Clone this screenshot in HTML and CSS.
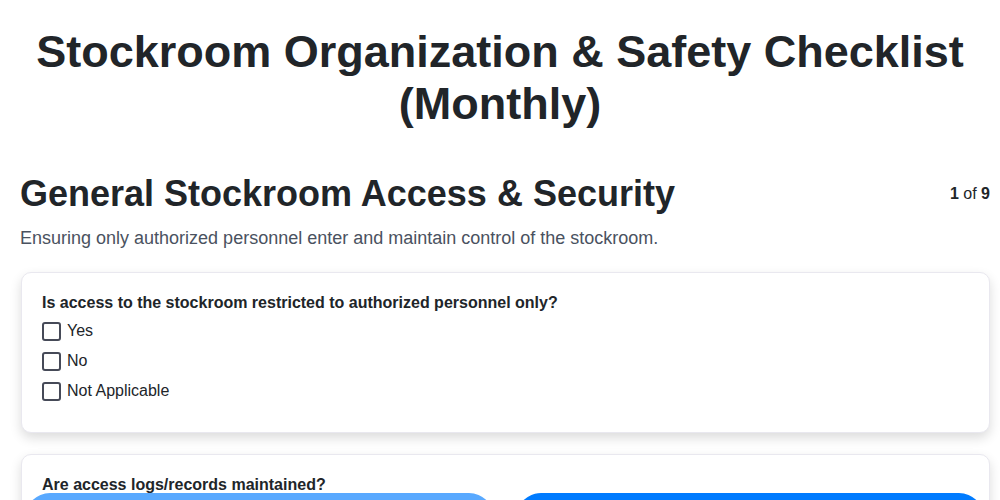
FILE: index.html
```html
<!DOCTYPE html>
<html lang="en">
<head>
<meta charset="utf-8">
<title>Stockroom Organization &amp; Safety Checklist (Monthly)</title>
<link rel="stylesheet" href="styles.css">
</head>
<body>
<main class="page">
  <h1 class="title">Stockroom Organization &amp; Safety Checklist (Monthly)</h1>
  <section class="section">
    <div class="section-head">
      <h2 class="section-title">General Stockroom Access &amp; Security</h2>
      <div class="counter"><b>1</b> of <b>9</b></div>
    </div>
    <p class="section-desc">Ensuring only authorized personnel enter and maintain control of the stockroom.</p>
    <div class="card">
      <div class="question">Is access to the stockroom restricted to authorized personnel only?</div>
      <label class="option"><span class="box"></span><span>Yes</span></label>
      <label class="option"><span class="box"></span><span>No</span></label>
      <label class="option"><span class="box"></span><span>Not Applicable</span></label>
    </div>
    <div class="card">
      <div class="question">Are access logs/records maintained?</div>
      <label class="option"><span class="box"></span><span>Yes</span></label>
      <label class="option"><span class="box"></span><span>No</span></label>
      <label class="option"><span class="box"></span><span>Not Applicable</span></label>
    </div>
  </section>
</main>
<nav class="nav">
  <button class="btn btn-prev" disabled>Previous</button>
  <button class="btn btn-next">Next</button>
</nav>
</body>
</html>
```
FILE: styles.css
```css
* { box-sizing: border-box; }
html, body { margin: 0; padding: 0; background: #fff; }
body {
  font-family: "Liberation Sans", Arial, sans-serif;
  color: #212529;
  overflow: hidden;
}
.page { padding: 0 10px; }
.title {
  margin: 26px 0 0;
  font-size: 45px;
  line-height: 52px;
  font-weight: 700;
  text-align: center;
}
.section { margin-top: 42px; padding-left: 10px; }
.section-head {
  display: flex;
  justify-content: space-between;
  align-items: center;
}
.section-title {
  margin: 0;
  font-size: 36px;
  line-height: 44px;
  font-weight: 700;
}
.counter { font-size: 16px; }
.section-desc {
  margin: 12px 0 0;
  font-size: 18px;
  line-height: 20px;
  color: #4a5260;
}
.card {
  margin: 24px 0 0 1px;
  border: 1px solid #e9e8ef;
  border-radius: 10px;
  padding: 20px 20px 30px;
  background: #fff;
  box-shadow: 0 5px 12px rgba(0, 0, 0, 0.14);
}
.card + .card { margin-top: 21px; }
.question {
  font-size: 16px;
  line-height: 19px;
  font-weight: 700;
  margin-bottom: 8px;
}
.option {
  display: flex;
  align-items: center;
  gap: 6px;
  height: 22px;
  font-size: 16px;
  margin-bottom: 8px;
}
.option:last-child { margin-bottom: 0; }
.box {
  width: 19px;
  height: 19px;
  border: 2px solid #464a58;
  border-radius: 3px;
  flex: none;
}
.nav {
  position: fixed;
  top: 493px;
  left: 25px;
  right: 16px;
  display: flex;
  gap: 22px;
}
.btn {
  flex: 1;
  height: 50px;
  border: none;
  border-radius: 25px;
  color: #fff;
  font-family: "Liberation Sans", Arial, sans-serif;
  font-size: 16px;
  font-weight: 700;
}
.btn-prev { background: #59a9ff; }
.btn-next { background: #007bff; }
```
